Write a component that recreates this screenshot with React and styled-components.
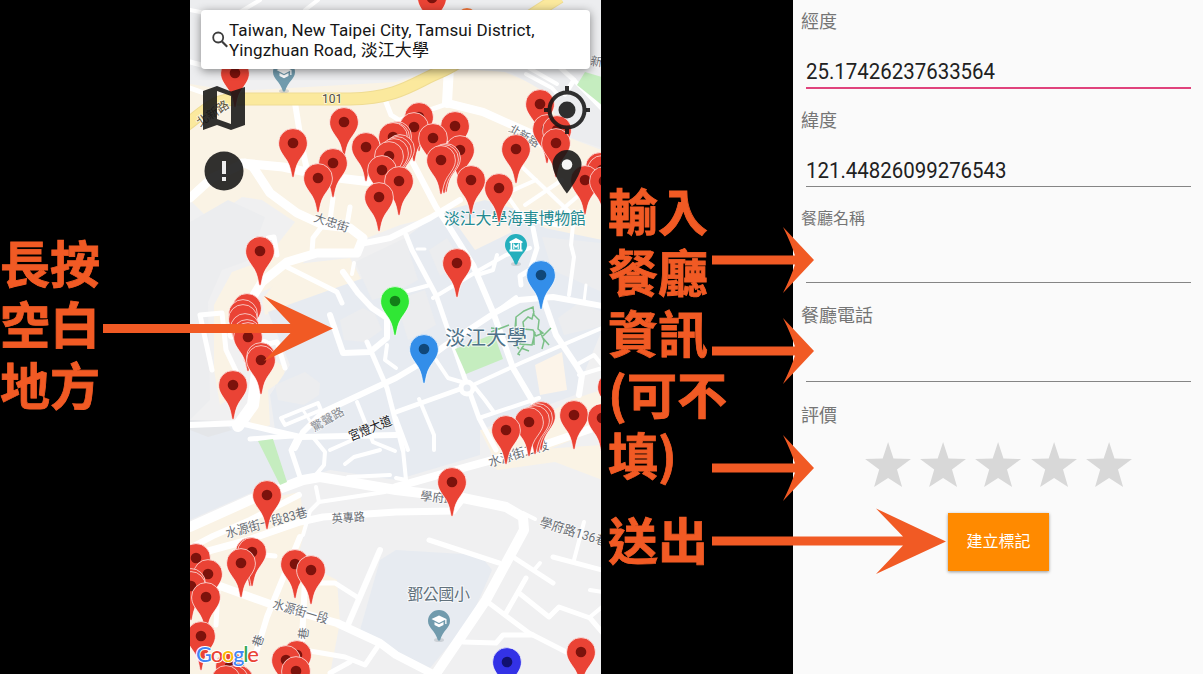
import React from "react";
import styled, { createGlobalStyle } from "styled-components";

const GlobalStyle = createGlobalStyle`
  html, body { margin: 0; padding: 0; background: #000; overflow: hidden; }
  *, *::before, *::after { box-sizing: border-box; }
`;

const uiFont = `Roboto, "Noto Sans CJK TC", sans-serif`;

const Page = styled.main`
  position: relative;
  display: grid;
  grid-template-columns: 190px 411px 192px 410px;
  width: 1203px;
  height: 674px;
  background: #000;
  font-family: ${uiFont};
`;

const Caption = styled.section`
  padding: ${(p) => p.$top}px 0 0 ${(p) => p.$left}px;
  color: #f15a24;
  font: 700 50px/61px "Noto Sans CJK TC", sans-serif;
  -webkit-text-stroke: 0.8px #f15a24;
`;

const CaptionLine = styled.div`
  white-space: nowrap;
  margin-top: ${(p) => p.$gap || 0}px;
`;

const MapPanel = styled.section`
  position: relative;
  overflow: hidden;
  padding: 10px 11px;
  background: #f0f0f1;
`;

const MapDrawing = styled.svg`
  position: absolute;
  inset: 0;
  width: 411px;
  height: 674px;
`;

const SearchCard = styled.div`
  position: relative;
  display: flex;
  align-items: center;
  height: 59px;
  padding-left: 11px;
  border-radius: 4px;
  background: #fff;
  box-shadow: 0 2px 10px rgba(0, 0, 0, 0.45);
`;

const SearchText = styled.div`
  margin-left: 1px;
  color: #151515;
  font-size: 17px;
  line-height: 20px;
  white-space: nowrap;
  letter-spacing: 0.11px;
`;

const Controls = styled.div`
  position: relative;
  display: flex;
  justify-content: space-between;
  padding-top: 17px;
`;

const ControlColumn = styled.div`
  display: flex;
  flex-direction: column;
  align-items: center;
  width: 46px;
  gap: ${(p) => p.$gap}px;
`;

const FormPanel = styled.section`
  display: flex;
  flex-direction: column;
  background: #fafafa;
  padding: 0 8px;
`;

const Field = styled.div`
  display: flex;
  flex-direction: column;
  height: ${(p) => p.$height}px;
  padding-top: ${(p) => p.$top}px;
`;

const Label = styled.label`
  color: #757575;
  font-size: ${(p) => p.$size || 18}px;
  line-height: 26px;
`;

const Value = styled.div`
  flex: 1;
  display: flex;
  align-items: flex-end;
  margin: 0 4px 0 5px;
  padding-bottom: 3px;
  border-bottom: ${(p) => (p.$active ? "2px solid #e0437c" : "1.5px solid #858585")};
  color: #212121;
  font-size: 21.5px;
  line-height: 25px;
`;

const ValueText = styled.span`
  display: inline-block;
  transform: scaleX(0.95);
  transform-origin: left;
`;

const Stars = styled.div`
  display: flex;
  justify-content: center;
  gap: 9px;
  margin: 3px 0 0 1px;
`;

const Submit = styled.button`
  align-self: center;
  width: 101px;
  height: 58px;
  margin: 26px 0 0 1px;
  padding: 0;
  border: 0;
  background: #ff8a00;
  color: #fff;
  font: 400 16px/20px ${uiFont};
  box-shadow: 0 1px 3px rgba(0, 0, 0, 0.4);
`;

const Arrows = styled.svg`
  position: absolute;
  inset: 0;
  width: 1203px;
  height: 674px;
  pointer-events: none;
`;

const RED = "#ea4335";
const pins = [
  [432, -2], [235, 73], [344, 122], [293, 143], [366, 147], [333, 163], [318, 178],
  [419, 117], [414, 127], [397, 136], [395, 137], [393, 137], [400, 149], [397, 151], [394, 153], [389, 156], [382, 170], [399, 181], [379, 197],
  [455, 126], [433, 138], [460, 150], [446, 158], [444, 159], [441, 160],
  [471, 180], [499, 188], [516, 149], [540, 104], [547, 129], [557, 130], [556, 143],
  [600, 167], [602, 170], [585, 180], [604, 181],
  [260, 251], [247, 308], [243, 314], [243, 319], [245, 328], [247, 334], [248, 337], [261, 357], [261, 360], [233, 385],
  [457, 263], [395, 301, "#30e735"], [541, 275, "#338ee9"], [424, 349, "#338ee9"],
  [612, 387], [541, 416], [538, 418], [535, 420], [529, 422], [506, 430], [574, 415], [602, 418],
  [267, 495], [196, 558], [208, 574], [191, 583], [191, 586], [206, 597],
  [250, 552], [252, 552], [241, 563], [295, 564], [311, 570],
  [201, 636], [297, 655], [286, 660], [296, 671], [230, 666], [239, 680], [234, 680], [226, 680],
  [452, 482], [507, 662, "#3332e6"], [581, 652],
];

const roads = [
  [4, "190,10 230,18 260,0"], [4, "305,10 318,0"], [5, "190,62 205,66"],
  [5, "190,88 204,93"],
  [6, "295,103 302,147 307,170"],
  [9, "242,163 283,167 330,177 363,181 405,185"],
  [9, "190,198 212,178 245,163 253,167 270,193 297,213 323,225 350,228 363,238 357,253 317,253 287,262 262,282 246,308 232,335"],
  [5, "384,97 391,115 402,122"],
  [5, "333,198 330,220"], [5, "350,207 347,225"],
  [5, "277,255 274,237 268,238"],
  [10, "449,67 447,103"],
  [8, "447,103 483,112 530,133 560,160"],
  [5, "447,104 400,120 380,150"],
  [6, "413,163 436,207 448,225 473,265 493,312 513,368 539,412"],
  [6, "365,243 390,238 430,218 460,200"],
  [5, "312,252 313,238 323,225"],
  [5, "287,267 337,292 342,303"], [6, "343,272 358,293 372,308 387,318 387,338 370,352 343,353 330,315"],
  [4, "354,263 352,274"], [5, "367,342 387,388 403,450"], [4, "387,345 385,360 396,368"],
  [6, "190,425 240,423 300,437 396,435"], [6, "295,448 303,432 323,412 396,378 423,362 446,345 496,312 519,300 553,297 602,306"],
  [5, "212,370 200,315 222,313 226,350 238,375"], [12, "264,345 257,372 253,405 238,426"], [5, "262,345 277,342 285,368"],
  [4, "281,418 318,403 321,410 285,425 281,418"], [3, "303,410 310,421"],
  [4, "357,402 373,442 395,451"], [4, "330,450 357,438 374,425"],
  [5, "406,235 412,250 436,295 466,382 479,418 496,450"],
  [4, "433,298 476,272 506,255 530,248"], [3, "417,249 425,249"], [4, "404,292 430,285"],
  [4, "473,385 523,362 602,328"], [6, "541,292 556,335 576,365 582,375 579,395"],
  [5, "396,412 463,388"], [4, "479,418 539,398"], [4, "419,399 434,435 434,450"], [4, "473,385 485,400 493,411"],
  [4, "396,418 408,450"], [4, "436,360 448,378 465,383"],
  [4, "477,275 493,270 497,255"], [4, "493,314 516,297"],
  [4, "573,225 571,245 574,257 569,295"], [3, "586,285 584,302"],
  [5, "521,285 520,276 530,270 537,248 533,228"],
  [4, "576,365 594,355 602,365"], [4, "579,375 602,368"],
  [4, "496,180 523,218 560,226"], [4, "520,165 580,222"], [4, "498,197 536,180"], [4, "525,205 562,180"], [4, "550,220 585,190"],
  [4, "526,74 552,88 558,95"], [4, "529,68 557,84"], [4, "574,80 602,109"], [5, "546,55 574,80 565,94"],
  [10, "190,527 250,500 303,480 320,477 396,490 463,498 506,507 523,517 524,530 486,600 433,678"],
  [8, "396,487 456,470 529,450 602,425"],
  [6, "190,548 213,536 250,520 299,495"],
  [7, "190,556 245,541 300,522 323,517 396,512 453,511 463,498"],
  [5, "250,439 292,436"], [5, "300,477 291,450 296,440"], [4, "314,477 324,465 325,452 312,436"], [4, "316,487 319,502 385,492"], [4, "319,502 310,511 303,535"],
  [4, "345,464 354,457 380,450"], [4, "348,477 390,475"],
  [6, "300,537 267,617 257,650"], [6, "305,580 302,640"],
  [8, "220,586 273,605 337,623 380,643 396,655 433,674"], [6, "380,550 347,627"], [5, "320,583 335,583 357,597"],
  [5, "310,651 345,657 365,665 380,643"], [5, "330,673 350,662"], [5, "218,590 216,625"], [5, "234,552 275,556"],
  [5, "429,540 499,563"], [5, "513,557 553,583"], [4, "540,563 534,570"], [5, "526,578 506,613"],
  [5, "489,603 529,633 576,657"], [5, "463,642 496,643 503,635 533,635"], [5, "519,593 549,617 559,607 590,618 602,632"],
  [4, "523,513 535,519"], [5, "553,557 602,570"], [4, "584,522 574,560"], [4, "590,590 602,592"], [4, "590,617 602,607"],
  [4, "396,478 406,480 403,450"],
];

const labels = [
  { x: 322, y: 103, s: 12, t: "101", c: "#4c4a41" },
  { x: 200, y: 127, s: 12, r: -34, t: "北新路", c: "#5a513b" },
  { x: 313, y: 221, s: 12, r: 18, t: "大忠街" },
  { x: 508, y: 131, s: 11, r: 30, t: "北新路" },
  { x: 590, y: 65, s: 12, r: 8, t: "新路" },
  { x: 314, y: 432, s: 12, r: -30, t: "驚聲路", c: "#8a8e94" },
  { x: 351, y: 441, s: 13, r: -22, t: "宮燈大道", c: "#202124", w: 45 },
  { x: 227, y: 538, s: 13, r: -15, t: "水源街一段83巷", w: 84 },
  { x: 332, y: 523, s: 12, r: -4, t: "英專路", w: 33 },
  { x: 272, y: 608, s: 13, r: 16, t: "水源街一段", w: 57 },
  { x: 260, y: 648, s: 12, r: -70, t: "巷" },
  { x: 307, y: 640, s: 12, r: -83, t: "巷" },
  { x: 420, y: 500, s: 12, r: 6, t: "學府路" },
  { x: 539, y: 526, s: 13, r: 17, t: "學府路136巷", w: 70 },
  { x: 490, y: 467, s: 13, r: -17, t: "水源街二段", w: 62 },
];

function Pin({ x, y, color = RED }) {
  const inner = color === RED ? "#7c120c" : color === "#30e735" ? "#137f18" : color === "#3332e6" ? "#11116f" : "#104779";
  return (
    <g transform={`translate(${x} ${y})`}>
      <path d="M-14.4 0a14.4 14.4 0 1 1 28.8 0c0 7-4.2 11.2-8.3 17.6C2.5 23.5 2 29 .9 34.3h-1.8C-2 29-2.5 23.5-6.1 17.6-10.2 11.2-14.4 7-14.4 0z" fill={color} stroke="#fff" strokeOpacity=".85" strokeWidth=".8" />
      <circle r="5.3" fill={inner} />
    </g>
  );
}

function PlacePin({ x, y, color, museum }) {
  return (
    <g transform={`translate(${x} ${y})`}>
      <ellipse cy="19" rx="5" ry="2" fill="#9aa0a6" opacity=".35" />
      <path d="M-11 0a11 11 0 1 1 22 0c0 7-7 9-10 19.500h-2C-4 9-11 7-11 0z" fill={color} />
      {museum ? (
        <>
          <path d="M-6.500-3.500 0-7 6.500-3.500V-2h-13zM-6.500 4.500h13v2h-13zM-5.500-2h1.700v7h-1.700zM3.800-2h1.700v7H3.800z" fill="#fff" />
          <path d="M-2.200 4v-4.500L0 2l2.200-2.500V4" fill="none" stroke="#fff" strokeWidth="1.200" />
        </>
      ) : (
        <path d="M-7.500-2 0-5.500 7.500-2v5H6.200v-4.200L0 2z M-4.500 1v3L0 6.200 4.500 4V1L0 3.300z" fill="#fff" />
      )}
    </g>
  );
}

function MapArt() {
  return (
    <MapDrawing viewBox="190 0 411 674">
      <g fill="#faf3e5">
        <path d="M190 84 235 91 396 82 450 66 505 72 560 96 575 140 602 150V240L530 231 500 205 440 215 400 225 362 240 357 252 310 256 283 282 232 306 224 335 240 390 220 405 214 370 214 305 232 272 265 260 295 222 262 200 242 197 210 220 190 200z" />
        <path d="M232 300 250 290 256 345 285 368 283 380 268 390 270 425 247 436 258 385z" />
        <path d="M288 265 350 258 363 283 330 290 265 315 262 300z" />
        <path d="M190 530 260 500 300 492 305 530 297 560 337 580 340 622 330 674H190z" />
        <path d="M497 470 602 428V390L570 400 530 425 480 430 490 450zM498 470 555 462 602 480V445L530 450 490 465z" />
      </g>
      <g fill="#e7ebf1">
        <path d="M268 312 330 290 372 275 405 238 440 212 485 200 525 212 545 228 602 240V330L575 395 480 430 480 455 396 480 330 470 300 480 262 483 215 470 190 500V428L240 427 275 430 270 395 290 365z" />
        <path d="M190 428 240 423 300 440 280 480 190 520z" />
        <path d="M396 550 480 555 492 570 470 620 430 668 393 650 360 630 380 560z" />
        <path d="M190 420 235 425 250 445 190 475z" />
      </g>
      <g fill="#ecedef">
        <path d="M190 0H602V82L550 95 510 72 440 68 396 80 190 80z" />
        <path d="M190 222 228 200 265 217 250 260 222 270 208 302 210 400 190 420z" />
        <path d="M540 90 580 88 602 110V148L570 138z" />
        <path d="M355 262 405 238 418 280 390 295 372 300z" />
        <path d="M340 320 363 308 375 314 382 330 365 342 344 340z" />
        <path d="M275 385 305 372 320 383 319 395 304 405 278 400z" />
        <path d="M396 300 425 290 436 325 408 340z" />
        <path d="M429 250 447 238 462 262 440 276z" />
        <path d="M542 237 602 243V292L552 270z" />
        <path d="M558 318 580 302 602 312V326L564 335z" />
      </g>
      <path d="M455 222 500 212 512 232 475 250z" fill="#faf3e9" />
      <path d="M535 365 562 352 567 390 540 395z" fill="#fcf4e9" />
      <path d="M190 420 222 421 232 430 208 437 190 430z" fill="#e4e6e9" />
      {roads.map(([width, points], i) => (
        <polyline key={i} points={points} fill="none" stroke="#fff" strokeWidth={width} strokeLinejoin="round" strokeLinecap="round" />
      ))}
      <circle cx="467" cy="388" r="6" fill="#e7ebf1" stroke="#fff" strokeWidth="5" />
      <path d="M185 126C205 111 214 99 238 99H350C400 98 415 82 440 72S525 18 560-3" fill="none" stroke="#efdc93" strokeWidth="13" />
      <path d="M185 126C205 111 214 99 238 99H350C400 98 415 82 440 72S525 18 560-3" fill="none" stroke="#fbe99d" strokeWidth="11" />
      <g fill="#c5edbf">
        <path d="M585 72 602 77V105L577 85z" />
        <path d="M455 349 494 334 503 359 466 374z" />
        <path d="M258 441 273 439 287 482 280 485z" />
      </g>
      <path
        d="M516 326v-9l8-6 9-4 1 8 5 5-1 9 5 4-7 3-3-6-9-1-1-7 5-5 4 2 2-8M516 317l-1 12 8 6-3 9 12 1 3-13M543 336l8-8M540 331l4 10-2 8M542 337l7 8M534 345v-14M524 345l-6 9 2 1M519 349l-4-6M521 348l8 3M500 329l-9-1M509 325l-18 7"
        fill="none" stroke="#7cc088" strokeWidth="1.500"
      />
      <PlacePin x={284} y={72} color="#719bad" />
      <PlacePin x={439} y={621} color="#719bad" />
      <PlacePin x={516} y={245} color="#24afbd" museum />
      {labels.map((l, i) => (
        <text key={i} transform={`translate(${l.x} ${l.y}) rotate(${l.r || 0})`} fontSize={l.s} textLength={l.w} lengthAdjust="spacingAndGlyphs" fill={l.c || "#696e75"} stroke="#fff" strokeWidth="1.500" strokeOpacity=".7" paintOrder="stroke" fontFamily='Roboto, "Noto Sans CJK TC", sans-serif'>{l.t}</text>
      ))}
      <g fontFamily='"Noto Sans CJK TC", sans-serif' stroke="#fff" strokeWidth="2" strokeOpacity=".7" paintOrder="stroke">
        <text x="444" y="224" fontSize="16" textLength="142" fill="#248a91">淡江大學海事博物館</text>
        <text x="445" y="344.500" fontSize="20.500" textLength="82" fill="#4e7288">淡江大學</text>
        <text x="407" y="600" fontSize="16" textLength="63" fill="#61717c">鄧公國小</text>
      </g>
      <circle cx="467" cy="18" r="10" fill="#f5793c" />
      {pins.map(([x, y, color], i) => <Pin key={i} x={x} y={y} color={color} />)}
      <text x="196" y="662" fontFamily="Lato, sans-serif" fontSize="22" fontWeight="500" textLength="63" stroke="#fff" strokeWidth="2" paintOrder="stroke">
        <tspan fill="#4285f4">G</tspan><tspan fill="#ea4335">o</tspan><tspan fill="#fbbc05">o</tspan><tspan fill="#4285f4">g</tspan><tspan fill="#34a853">l</tspan><tspan fill="#ea4335">e</tspan>
      </text>
    </MapDrawing>
  );
}

const iconFill = "rgba(20, 20, 20, 0.88)";

function MapIcon() {
  return (
    <svg width="44" height="46" viewBox="0 0 44 46">
      <path fillRule="evenodd" fill={iconFill} d="M1 5 15 0 29 5.500 43 1V39L29 44 15 39 1 44zM15 5V33L29 38V10z" />
    </svg>
  );
}

function AlertIcon() {
  return (
    <svg width="40" height="40" viewBox="0 0 40 40">
      <circle cx="20" cy="20" r="19.500" fill={iconFill} />
      <path d="M18 10h4v13h-4zM18 26h4v4h-4z" fill="#eee" />
    </svg>
  );
}

function LocateIcon() {
  return (
    <svg width="46" height="48" viewBox="0 0 46 48">
      <g fill="none" stroke={iconFill} strokeWidth="4">
        <circle cx="23" cy="24" r="17.500" />
        <path d="M23 0v5M23 43v5M0 24h4M42 24h4" />
      </g>
      <circle cx="23" cy="24" r="8.500" fill={iconFill} />
    </svg>
  );
}

function DropIcon() {
  return (
    <svg width="30" height="44" viewBox="0 0 30 44">
      <path fill={iconFill} d="M15 0a14.500 14.500 0 0 1 14.500 14.500C29.500 25 15 43.500 15 43.500S.5 25 .5 14.500A14.500 14.500 0 0 1 15 0z" />
      <circle cx="15" cy="14.500" r="5.300" fill="#f5f5f5" />
    </svg>
  );
}

function SearchIcon() {
  return (
    <svg width="16" height="17" viewBox="0 0 16 17">
      <circle cx="6.200" cy="6.500" r="5" fill="none" stroke="#3c3c3c" strokeWidth="1.800" />
      <path d="m10 10.500 5.200 5.200" stroke="#3c3c3c" strokeWidth="2.200" />
    </svg>
  );
}

function Star() {
  return (
    <svg width="46.200" height="45" viewBox="0 0 46 45">
      <path fill="#d8d8d8" d="M23 0l5.400 16.600L46 17 31.900 27.600 37 45 23 36 9 45l5.100-17.400L0 17l17.600-.4z" />
    </svg>
  );
}

const fields = [
  { label: "經度", value: "25.17426237633564", height: 89, top: 9, active: true },
  { label: "緯度", value: "121.44826099276543", height: 98, top: 19 },
  { label: "餐廳名稱", height: 96, top: 19, size: 16 },
  { label: "餐廳電話", height: 99, top: 20 },
];

export default function App() {
  return (
    <>
      <GlobalStyle />
      <Page>
        <Caption $top={231} $left={0}>
          {["長按", "空白", "地方"].map((t) => <CaptionLine key={t}>{t}</CaptionLine>)}
        </Caption>
        <MapPanel>
          <MapArt />
          <SearchCard>
            <SearchIcon />
            <SearchText>Taiwan, New Taipei City, Tamsui District,<br />Yingzhuan Road, 淡江大學</SearchText>
          </SearchCard>
          <Controls>
            <ControlColumn $gap={19}><MapIcon /><AlertIcon /></ControlColumn>
            <ControlColumn $gap={16}><LocateIcon /><DropIcon /></ControlColumn>
          </Controls>
        </MapPanel>
        <Caption $top={179} $left={7}>
          {["輸入", "餐廳", "資訊", "(可不", "填)"].map((t) => <CaptionLine key={t}>{t}</CaptionLine>)}
          <CaptionLine $gap={24}>送出</CaptionLine>
        </Caption>
        <FormPanel>
          {fields.map((f) => (
            <Field key={f.label} $height={f.height} $top={f.top}>
              <Label $size={f.size}>{f.label}</Label>
              <Value $active={f.active}><ValueText>{f.value}</ValueText></Value>
            </Field>
          ))}
          <Field $height={57} $top={21}>
            <Label>評價</Label>
          </Field>
          <Stars>{[1, 2, 3, 4, 5].map((n) => <Star key={n} />)}</Stars>
          <Submit>建立標記</Submit>
        </FormPanel>
        <Arrows viewBox="0 0 1203 674">
          <g fill="#f15a24">
            <path d="M103 324H290.500L264 296 333 328.500 264 361 290.500 333H103z" />
            {[260, 351, 468].map((y) => (
              <path key={y} transform={`translate(0 ${y})`} d="M712-4.500H795Q791-17 783-33L814 0 783 33Q791 17 795 4.500H712z" />
            ))}
            <path d="M712 536.500H903L876 508.500 946 541.500 876 574 903 545.500H712z" />
          </g>
        </Arrows>
      </Page>
    </>
  );
}
